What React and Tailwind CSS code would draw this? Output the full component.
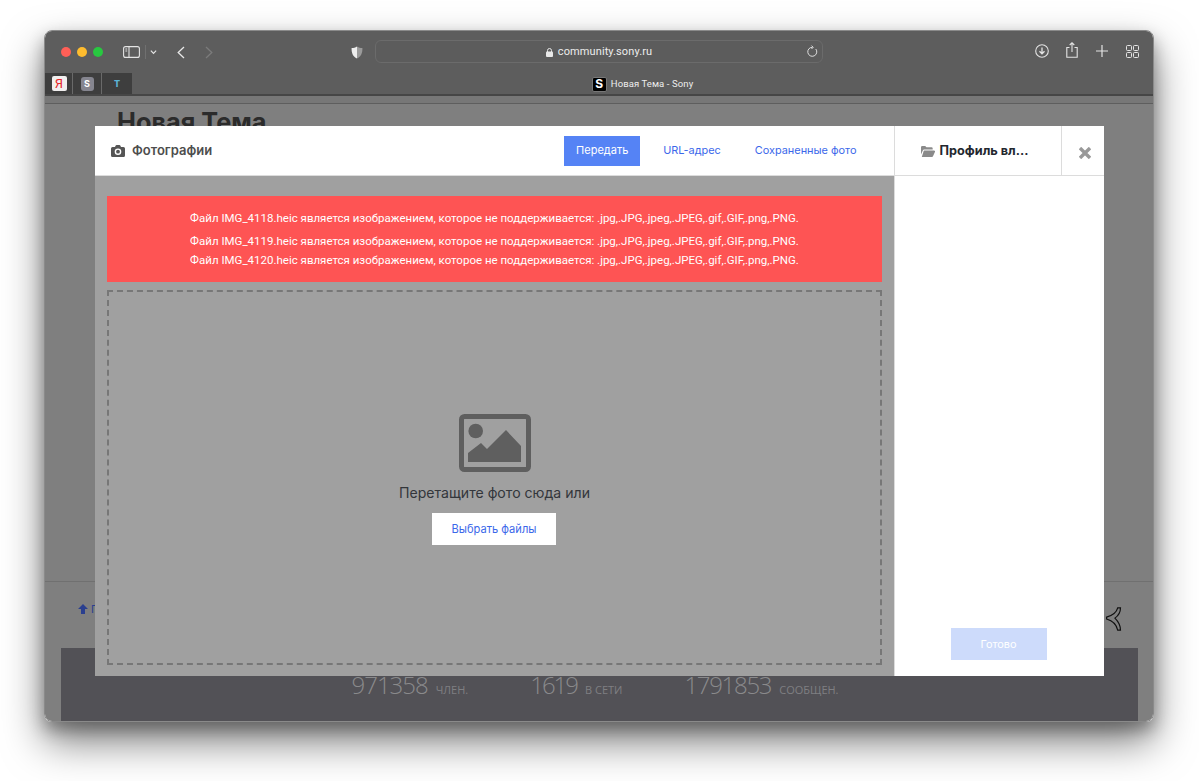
import React from "react";

const font = { fontFamily: "Inter, 'Liberation Sans', sans-serif" };
const roboto = { fontFamily: "Roboto, 'Liberation Sans', sans-serif" };
const openSans = { fontFamily: "'Open Sans', 'Liberation Sans', sans-serif" };

function ErrorLine({ name, className }) {
  return (
    <p className={`text-center text-[11.5px] leading-[20px] text-white ${className}`} style={roboto}>
      Файл {name}.heic является изображением, которое не поддерживается: .jpg,.JPG,.jpeg,.JPEG,.gif,.GIF,.png,.PNG.
    </p>
  );
}

function Stat({ value, label, tracking }) {
  return (
    <div className="flex items-baseline gap-[8px]" style={openSans}>
      <span className={`text-[24px] font-light text-[#8a8a8c] ${tracking}`}>{value}</span>
      <span className="text-[11px] text-[#7f7f82]">{label}</span>
    </div>
  );
}

function Toolbar() {
  return (
    <div className="relative flex h-[42px] shrink-0 items-center bg-[#5d5d5d] pl-[16px]">
      <div className="flex gap-[6px]">
        <span className="h-[10px] w-[10px] rounded-full bg-[#ff5f57]" />
        <span className="h-[10px] w-[10px] rounded-full bg-[#febc2e]" />
        <span className="h-[10px] w-[10px] rounded-full bg-[#28c840]" />
      </div>
      <svg className="ml-[20px]" width="17" height="12" viewBox="0 0 17 12" fill="none" stroke="#e4e4e4" strokeWidth="1.1">
        <rect x="0.6" y="0.6" width="15.8" height="10.8" rx="2" />
        <path d="M6 .6v10.8" />
        <path d="M2.4 3h1.8M2.4 5h1.8" />
      </svg>
      <span className="ml-[5px] h-[14px] w-px bg-[#707070]" />
      <svg className="ml-[4px]" width="7" height="6" viewBox="0 0 8 6" fill="none" stroke="#e4e4e4" strokeWidth="1.4"><path d="M1 1.500l3 3 3-3" /></svg>
      <svg className="ml-[20px]" width="8" height="13" viewBox="0 0 8 13" fill="none" stroke="#e8e8e8" strokeWidth="1.3"><path d="M7 1L1.200 6.500 7 12" /></svg>
      <svg className="ml-[20px]" width="8" height="13" viewBox="0 0 8 13" fill="none" stroke="#7b7b7b" strokeWidth="1.3"><path d="M1 1l5.800 5.500L1 12" /></svg>
      <svg className="ml-[138px]" width="12" height="13" viewBox="0 0 12 13">
        <path d="M6 .5c1.700 1 3.400 1.500 5.400 1.600.2 5-1.400 8.600-5.400 10.400Z" fill="#9a9a9a" />
        <path d="M6 .5C4.300 1.500 2.600 2 .6 2.100.4 7.100 2 10.700 6 12.500Z" fill="#eeeeee" />
      </svg>
      <div className="relative mb-[2px] ml-[12px] flex h-[23px] w-[448px] items-center justify-center rounded-[6px] border border-[#6b6b6b] bg-[#5c5c5c] pt-[3px]">
        <svg width="7" height="9" viewBox="0 0 7 9" className="mr-[5px]">
          <rect x="0" y="3.500" width="7" height="5.500" rx="1" fill="#e8e8e8" />
          <path d="M1.500 4V2.500a2 2 0 014 0V4" fill="none" stroke="#e8e8e8" />
        </svg>
        <span className="text-[11px] tracking-[0.1px] text-[#ececec]" style={roboto}>community.sony.ru</span>
        <svg className="absolute right-[4px] top-[4px]" width="12" height="13" viewBox="0 0 12 13" fill="none" stroke="#dedede" strokeWidth="1">
          <path d="M9.800 4a4.500 4.500 0 11-3.300-1.700" />
          <path d="M5.500 .6l1.700 1.700-1.700 1.700" />
        </svg>
      </div>
      <svg className="ml-[212px] mb-[2px]" width="14" height="14" viewBox="0 0 14 14" fill="none" stroke="#e4e4e4" strokeWidth="1.100">
        <circle cx="7" cy="7" r="6.300" />
        <path d="M7 3.500v6M4.500 7.300L7 9.800l2.500-2.500" strokeWidth="1.300" />
      </svg>
      <svg className="mb-[4px] ml-[17px]" width="12" height="16" viewBox="0 0 12 16" fill="none" stroke="#e4e4e4" strokeWidth="1.100">
        <path d="M3.500 5.500H.8v9.700h10.400V5.500H8.500" />
        <path d="M6 10V.8M3.700 3L6 .8 8.300 3" />
      </svg>
      <svg className="ml-[18px] mb-[2px]" width="12" height="12" viewBox="0 0 12 12" stroke="#e4e4e4" strokeWidth="1.200"><path d="M6 0v12M0 6h12" /></svg>
      <svg className="ml-[18px] mb-[2px]" width="13" height="13" viewBox="0 0 13 13" fill="none" stroke="#e4e4e4" strokeWidth="1">
        <rect x=".5" y=".5" width="5" height="5" rx="1" />
        <rect x="7.500" y=".5" width="5" height="5" rx="1" />
        <rect x=".5" y="7.500" width="5" height="5" rx="1" />
        <rect x="7.500" y="7.500" width="5" height="5" rx="1" />
      </svg>
    </div>
  );
}

function TabBar() {
  return (
    <div className="relative flex h-[23px] shrink-0 items-stretch border-b-2 border-[#464646] bg-[#5d5d5d]">
      <div className="flex w-[87px] bg-[#3e3e3e]">
        <div className="flex w-[28px] items-center justify-center border-r border-[#6a6a6a] pl-[1px]">
          <span className="flex h-[15px] w-[15px] items-center justify-center rounded-[2px] bg-[#f1efef] text-[13px] leading-none text-[#e6262a]" style={roboto}>Я</span>
        </div>
        <div className="flex w-[29px] items-center justify-center border-r border-[#6a6a6a]">
          <span className="flex h-[14px] w-[13px] items-center justify-center rounded-[3px] bg-[#85858f] text-[9px] font-bold leading-none text-white">S</span>
        </div>
        <div className="flex flex-1 items-center justify-center">
          <span className="text-[9px] font-extrabold leading-none text-[#5cb3d6]">T</span>
        </div>
      </div>
      <div className="flex flex-1 items-center justify-center pt-[1px]">
        <span className="mr-[4px] flex h-[15px] w-[15px] items-center justify-center rounded-[2px] border border-[#777] bg-black text-[12px] font-bold leading-none text-white">S</span>
        <span className="text-[9.5px] tracking-[0.1px] text-[#ededed]" style={roboto}>Новая Тема - Sony</span>
      </div>
    </div>
  );
}

function CameraIcon() {
  return (
    <svg width="14" height="12" viewBox="0 0 14 12">
      <path fillRule="evenodd" fill="#555" d="M1.500 2H4l.7-1.500A1 1 0 015.600 0h2.800a1 1 0 01.9.5L10 2h2.500A1.500 1.500 0 0114 3.500v7a1.500 1.500 0 01-1.500 1.500h-11A1.500 1.500 0 010 10.500v-7A1.500 1.500 0 011.500 2ZM7 3.400a3.300 3.300 0 100 6.600 3.300 3.300 0 000-6.600Z" />
      <circle cx="7" cy="6.700" r="1.900" fill="#555" />
    </svg>
  );
}

function FolderIcon() {
  return (
    <svg width="14" height="11" viewBox="0 0 14 11" fill="#8a8a8a">
      <path d="M0 1.200A1.200 1.200 0 011.200 0h3l1.300 1.300h5a1.200 1.200 0 011.200 1.200V3.600H3.300A1.800 1.800 0 001.700 4.700L0 8.600Z" />
      <path d="M3.300 4.600H13a1 1 0 01.9 1.400L12 10.300a1.200 1.200 0 01-1 .7H.8l1.700-5.600a1 1 0 01.8-.8Z" />
    </svg>
  );
}

function CloseIcon() {
  return (
    <svg width="12" height="12" viewBox="0 0 12 12" stroke="#999" strokeWidth="3.400" strokeLinecap="square">
      <path d="M2.200 2.200l7.600 7.600M9.800 2.200l-7.600 7.600" />
    </svg>
  );
}

function Modal() {
  return (
    <div className="absolute left-[50px] top-[30px] flex h-[550px] w-[1009px] bg-white">
      <div className="flex w-[799px] flex-col">
        <div className="flex h-[50px] shrink-0 items-center border-b border-[#dcdcdc] bg-white pl-[16px]">
          <CameraIcon />
          <span className="ml-[7px] text-[13px] font-semibold text-[#4d4d4d]">Фотографии</span>
          <div className="ml-[352px] flex h-[30px] w-[76px] items-center justify-center bg-[#5583f5] text-[11px] text-white">Передать</div>
          <span className="ml-[23px] text-[10.9px] text-[#3b68ea]">URL-адрес</span>
          <span className="ml-[34px] text-[10.9px] text-[#3b68ea]">Сохраненные фото</span>
        </div>
        <div className="flex flex-1 flex-col bg-[#a0a0a0] px-[12px] pb-[11px] pt-[20px]">
          <div className="flex h-[86px] shrink-0 flex-col bg-[#fe5454] pt-[12px]">
            <ErrorLine name="IMG_4118" className="" />
            <ErrorLine name="IMG_4119" className="mt-[3px]" />
            <ErrorLine name="IMG_4120" className="-mt-[1px]" />
          </div>
          <div className="mt-[8px] flex flex-1 flex-col items-center border-2 border-dashed border-[#777777] pt-[122px]">
            <svg width="72" height="58" viewBox="0 0 72 58">
              <rect x="2.500" y="2.500" width="67" height="53" rx="3" fill="none" stroke="#5f5f5f" strokeWidth="5" />
              <circle cx="16.700" cy="17" r="7.300" fill="#5f5f5f" />
              <path d="M9 48V39L22 29l6 6L47 16l15 16v16Z" fill="#5f5f5f" />
            </svg>
            <p className="mt-[10px] text-[14.1px] leading-[22px] text-[#33363b]">Перетащите фото сюда или</p>
            <div className="mr-[1px] mt-[9px] flex h-[32px] w-[124px] items-center justify-center bg-white text-[11.1px] text-[#3b68ea]">Выбрать файлы</div>
          </div>
        </div>
      </div>
      <div className="flex flex-1 flex-col border-l border-[#dcdcdc]">
        <div className="flex h-[50px] shrink-0 border-b border-[#dcdcdc]">
          <div className="flex w-[167px] items-center justify-center gap-[5px] border-r border-[#dcdcdc] pr-[7px] pt-[1px]">
            <FolderIcon />
            <span className="text-[12.7px] font-bold text-[#23272e]">Профиль вл...</span>
          </div>
          <div className="flex flex-1 items-center justify-center pl-[3px] pt-[4px]">
            <CloseIcon />
          </div>
        </div>
        <div className="flex flex-1 items-end justify-center pb-[16px] pr-[2px]">
          <div className="flex h-[32px] w-[96px] items-center justify-center bg-[#cddbfb] text-[10.9px] text-white">Готово</div>
        </div>
      </div>
    </div>
  );
}

function Page() {
  return (
    <div className="relative flex flex-1 flex-col overflow-hidden bg-[#7f7f7f]">
      <div className="h-[8px] shrink-0 border-b border-[#5e5e5e] bg-[#777777]" />
      <h1 className="ml-[72px] mt-[3px] text-[25.3px] font-bold leading-[30px] text-[#2b2b2b]">Новая Тема</h1>
      <div className="mt-[444px] h-px shrink-0 bg-[#707070]" />
      <div className="flex h-[66px] shrink-0 items-start justify-between pl-[33px] pr-[30px]">
        <span className="mt-[19px] flex items-center gap-[3px] text-[11px] text-[#2a3f8f]">
          <svg width="10" height="10" viewBox="0 0 10 10" fill="#2a3f8f"><path d="M5 0l5 5H7v5H3V5H0Z" /></svg>
          Г
        </span>
        <svg className="mt-[25px]" width="18" height="25" viewBox="0 0 18 27" fill="none" stroke="#111" strokeWidth="1.300">
          <path d="M16 1h-3c-1 4-5 8-12 10v2c7 2 11 7 12 12h3c0-5-2-9-6-13 4-3 6-6 6-11Z" />
        </svg>
      </div>
      <div className="ml-[16px] mr-[15px] flex flex-1 items-start justify-center gap-[62px] bg-[#525156] pr-[9px] pt-[19px]">
        <Stat value="971358" label="ЧЛЕН." tracking="tracking-[-1px]" />
        <Stat value="1619" label="В СЕТИ" tracking="tracking-[-2px]" />
        <Stat value="1791853" label="СООБЩЕН." tracking="tracking-[-1.3px]" />
      </div>
      <Modal />
    </div>
  );
}

export default function App() {
  return (
    <div className="h-[781px] w-[1199px] bg-white pl-[44px] pr-[45px] pt-[30px]" style={font}>
      <div className="flex h-[692px] flex-col overflow-hidden rounded-[8px] border border-[#8a8a8a] shadow-[0_20px_40px_rgba(0,0,0,0.5),0_8px_16px_rgba(0,0,0,0.3)]">
        <Toolbar />
        <TabBar />
        <Page />
      </div>
    </div>
  );
}
